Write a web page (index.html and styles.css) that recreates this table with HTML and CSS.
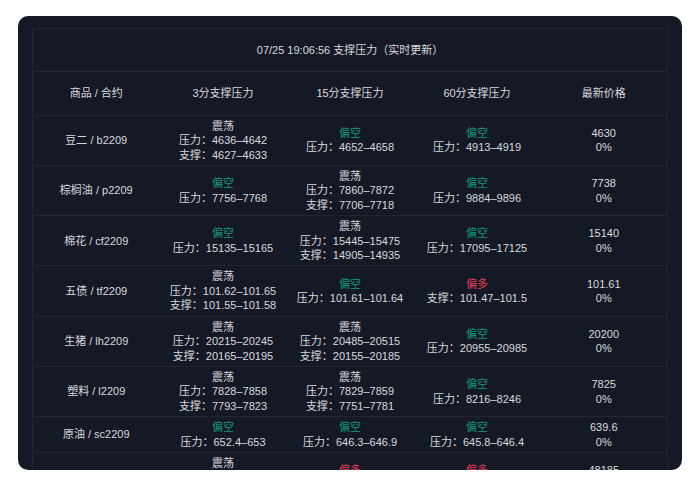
FILE: index.html
```html
<!DOCTYPE html>
<html lang="zh">
<head>
<meta charset="utf-8">
<title>支撑压力</title>
<link rel="stylesheet" href="styles.css">
</head>
<body>
<div class="panel">
  <table class="board">
    <thead>
      <tr><th class="title" colspan="5">07/25 19:06:56 支撑压力（实时更新）</th></tr>
      <tr class="head">
        <th>商品 / 合约</th>
        <th>3分支撑压力</th>
        <th>15分支撑压力</th>
        <th>60分支撑压力</th>
        <th>最新价格</th>
      </tr>
    </thead>
    <tbody>
      <tr>
        <td>豆二 / b2209</td>
        <td><div>震荡</div><div>压力：4636–4642</div><div>支撑：4627–4633</div></td>
        <td><div class="bear">偏空</div><div>压力：4652–4658</div></td>
        <td><div class="bear">偏空</div><div>压力：4913–4919</div></td>
        <td><div>4630</div><div>0%</div></td>
      </tr>
      <tr>
        <td>棕榈油 / p2209</td>
        <td><div class="bear">偏空</div><div>压力：7756–7768</div></td>
        <td><div>震荡</div><div>压力：7860–7872</div><div>支撑：7706–7718</div></td>
        <td><div class="bear">偏空</div><div>压力：9884–9896</div></td>
        <td><div>7738</div><div>0%</div></td>
      </tr>
      <tr>
        <td>棉花 / cf2209</td>
        <td><div class="bear">偏空</div><div>压力：15135–15165</div></td>
        <td><div>震荡</div><div>压力：15445–15475</div><div>支撑：14905–14935</div></td>
        <td><div class="bear">偏空</div><div>压力：17095–17125</div></td>
        <td><div>15140</div><div>0%</div></td>
      </tr>
      <tr>
        <td>五债 / tf2209</td>
        <td><div>震荡</div><div>压力：101.62–101.65</div><div>支撑：101.55–101.58</div></td>
        <td><div class="bear">偏空</div><div>压力：101.61–101.64</div></td>
        <td><div class="bull">偏多</div><div>支撑：101.47–101.5</div></td>
        <td><div>101.61</div><div>0%</div></td>
      </tr>
      <tr>
        <td>生猪 / lh2209</td>
        <td><div>震荡</div><div>压力：20215–20245</div><div>支撑：20165–20195</div></td>
        <td><div>震荡</div><div>压力：20485–20515</div><div>支撑：20155–20185</div></td>
        <td><div class="bear">偏空</div><div>压力：20955–20985</div></td>
        <td><div>20200</div><div>0%</div></td>
      </tr>
      <tr>
        <td>塑料 / l2209</td>
        <td><div>震荡</div><div>压力：7828–7858</div><div>支撑：7793–7823</div></td>
        <td><div>震荡</div><div>压力：7829–7859</div><div>支撑：7751–7781</div></td>
        <td><div class="bear">偏空</div><div>压力：8216–8246</div></td>
        <td><div>7825</div><div>0%</div></td>
      </tr>
      <tr>
        <td>原油 / sc2209</td>
        <td><div class="bear">偏空</div><div>压力：652.4–653</div></td>
        <td><div class="bear">偏空</div><div>压力：646.3–646.9</div></td>
        <td><div class="bear">偏空</div><div>压力：645.8–646.4</div></td>
        <td><div>639.6</div><div>0%</div></td>
      </tr>
      <tr>
        <td>沪金 / au2212</td>
        <td><div>震荡</div><div>压力：48195–48215</div><div>支撑：48105–48125</div></td>
        <td><div class="bull">偏多</div><div>支撑：48075–48095</div></td>
        <td><div class="bull">偏多</div><div>支撑：47905–47925</div></td>
        <td><div>48185</div><div>0%</div></td>
      </tr>
    </tbody>
  </table>
</div>
</body>
</html>
```
FILE: styles.css
```css
html, body {
  margin: 0;
  padding: 0;
  background: #ffffff;
}

body {
  font-family: "Liberation Sans", "Noto Sans CJK SC", sans-serif;
  font-size: 11px;
  color: #d7d9df;
}

.panel {
  margin: 16px 18px 0;
  height: 454px;
  box-sizing: border-box;
  padding: 12px 14px 0;
  background: #151925;
  border-radius: 10px;
  overflow: hidden;
}

.board {
  width: 100%;
  border-collapse: collapse;
  table-layout: fixed;
  border: 1px solid #212636;
}

.board th,
.board td {
  text-align: center;
  vertical-align: middle;
  font-weight: normal;
  border-bottom: 1px solid #212636;
  line-height: 14.4px;
}

.board th {
  padding: 14px 0;
  color: #d7d9df;
}

.board td {
  padding: 3px 0;
}

.bear {
  color: #17957b;
}

.bull {
  color: #e03c5b;
}
```
